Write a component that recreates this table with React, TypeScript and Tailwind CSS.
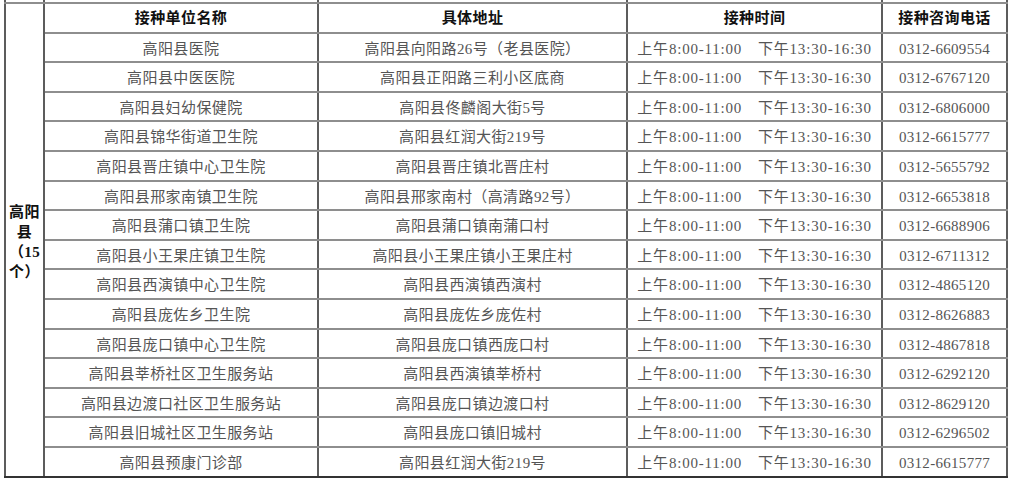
type Site = {
  name: string;
  address: string;
  phone: string;
};

const sites: Site[] = [
  { name: "高阳县医院", address: "高阳县向阳路26号（老县医院）", phone: "0312-6609554" },
  { name: "高阳县中医医院", address: "高阳县正阳路三利小区底商", phone: "0312-6767120" },
  { name: "高阳县妇幼保健院", address: "高阳县佟麟阁大街5号", phone: "0312-6806000" },
  { name: "高阳县锦华街道卫生院", address: "高阳县红润大街219号", phone: "0312-6615777" },
  { name: "高阳县晋庄镇中心卫生院", address: "高阳县晋庄镇北晋庄村", phone: "0312-5655792" },
  { name: "高阳县邢家南镇卫生院", address: "高阳县邢家南村（高清路92号）", phone: "0312-6653818" },
  { name: "高阳县蒲口镇卫生院", address: "高阳县蒲口镇南蒲口村", phone: "0312-6688906" },
  { name: "高阳县小王果庄镇卫生院", address: "高阳县小王果庄镇小王果庄村", phone: "0312-6711312" },
  { name: "高阳县西演镇中心卫生院", address: "高阳县西演镇西演村", phone: "0312-4865120" },
  { name: "高阳县庞佐乡卫生院", address: "高阳县庞佐乡庞佐村", phone: "0312-8626883" },
  { name: "高阳县庞口镇中心卫生院", address: "高阳县庞口镇西庞口村", phone: "0312-4867818" },
  { name: "高阳县莘桥社区卫生服务站", address: "高阳县西演镇莘桥村", phone: "0312-6292120" },
  { name: "高阳县边渡口社区卫生服务站", address: "高阳县庞口镇边渡口村", phone: "0312-8629120" },
  { name: "高阳县旧城社区卫生服务站", address: "高阳县庞口镇旧城村", phone: "0312-6296502" },
  { name: "高阳县预康门诊部", address: "高阳县红润大街219号", phone: "0312-6615777" },
];

// shared cell borders: darker verticals, softer horizontals
const cell =
  "border-x-2 border-x-[#5c5c5c] border-y-2 border-y-[#8e8e8e] p-0 text-center align-middle";

export default function App() {
  return (
    <div
      className="w-[1011px] h-[480px] overflow-hidden bg-white"
      style={{ fontFamily: '"Liberation Serif", "Noto Sans CJK SC", serif' }}
    >
      <table className="ml-[4px] w-[1002px] table-fixed border-collapse text-[15px] tracking-[0.4px] text-[#555]">
        <colgroup>
          <col className="w-[39px]" />
          <col className="w-[274px]" />
          <col className="w-[309px]" />
          <col className="w-[255px]" />
          <col className="w-[125px]" />
        </colgroup>
        <tbody>
          {/* tail of the previous block, cut off by the top edge */}
          <tr className="h-[3px]">
            <td className={`${cell} border-t-0`} />
            <td className={`${cell} border-t-0`} />
            <td className={`${cell} border-t-0`} />
            <td className={`${cell} border-t-0`} />
            <td className={`${cell} border-t-0`} />
          </tr>
          <tr className="h-[29.6px] font-bold text-[#111]">
            <td
              rowSpan={16}
              className={`${cell} border-t-black border-b-[#333] pt-[4px] text-[15px] leading-[20px] text-[#111]`}
            >
              高阳
              <br />
              县
              <br />
              （15
              <br />
              个）
            </td>
            <td className={`${cell} border-t-black`}>接种单位名称</td>
            <td className={`${cell} border-t-black`}>具体地址</td>
            <td className={`${cell} border-t-black`}>接种时间</td>
            <td className={`${cell} border-t-black`}>接种咨询电话</td>
          </tr>
          {sites.map((s, i) => {
            const last = i === sites.length - 1 ? "border-b-[#333]" : "";
            return (
              <tr key={i} className="h-[29.6px]">
                <td className={`${cell} ${last} pt-[3px]`}>{s.name}</td>
                <td className={`${cell} ${last} pt-[3px]`}>{s.address}</td>
                <td className={`${cell} ${last} pt-[3px] tracking-[0.8px]`}>上午8:00-11:00　下午13:30-16:30</td>
                <td className={`${cell} ${last} pt-[3px] tracking-[0.3px]`}>{s.phone}</td>
              </tr>
            );
          })}
        </tbody>
      </table>
    </div>
  );
}
